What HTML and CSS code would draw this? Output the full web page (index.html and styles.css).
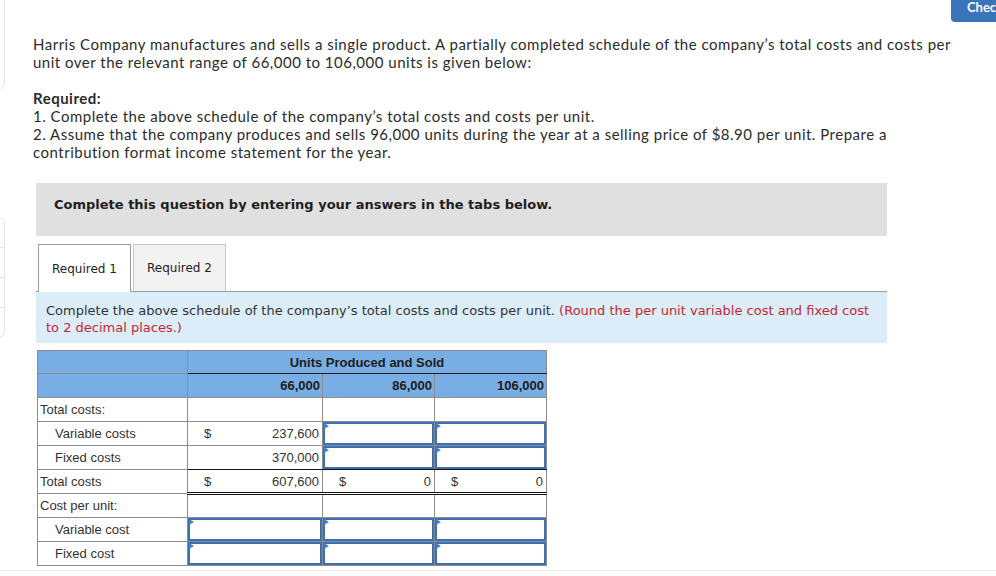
FILE: index.html
```html
<!DOCTYPE html>
<html lang="en">
<head>
<meta charset="utf-8">
<title>Harris Company</title>
<link rel="stylesheet" href="styles.css">
</head>
<body>
<div class="check">Check my work</div>
<div class="shell">
  <aside class="rail">
    <div class="rail-card rail-top"></div>
    <div class="rail-card rail-list"><div></div><div></div><div></div><div></div></div>
  </aside>
  <main class="content">
    <p class="intro">Harris Company manufactures and sells a single product. A partially completed schedule of the company’s total costs and costs per unit over the relevant range of 66,000 to 106,000 units is given below:</p>
    <div class="required">
      <p class="req-title">Required:</p>
      <p>1. Complete the above schedule of the company’s total costs and costs per unit.</p>
      <p>2. Assume that the company produces and sells 96,000 units during the year at a selling price of $8.90 per unit. Prepare a contribution format income statement for the year.</p>
    </div>
    <div class="instructions">Complete this question by entering your answers in the tabs below.</div>
    <div class="tabs">
      <div class="tab active">Required 1</div>
      <div class="tab">Required 2</div>
    </div>
    <div class="prompt">Complete the above schedule of the company’s total costs and costs per unit. <span class="hint">(Round the per unit variable cost and fixed cost to 2 decimal places.)</span></div>
    <table class="schedule">
      <colgroup><col class="c-label"><col class="c-1"><col class="c-n"><col class="c-n"></colgroup>
      <tr class="h1">
        <th class="blank"></th>
        <th colspan="3" class="units">Units Produced and Sold</th>
      </tr>
      <tr class="h2">
        <th class="blank"></th>
        <th class="qty">66,000</th>
        <th class="qty">86,000</th>
        <th class="qty">106,000</th>
      </tr>
      <tr>
        <td class="label">Total costs:</td>
        <td></td><td></td><td></td>
      </tr>
      <tr>
        <td class="label indent">Variable costs</td>
        <td class="num"><div class="amt"><span>$</span><span>237,600</span></div></td>
        <td class="input"><div class="field"></div></td>
        <td class="input"><div class="field"></div></td>
      </tr>
      <tr class="above-total">
        <td class="label indent">Fixed costs</td>
        <td class="num"><div class="amt"><span></span><span>370,000</span></div></td>
        <td class="input"><div class="field"></div></td>
        <td class="input"><div class="field"></div></td>
      </tr>
      <tr class="total">
        <td class="label">Total costs</td>
        <td class="num"><div class="amt"><span>$</span><span>607,600</span></div></td>
        <td class="num"><div class="amt"><span>$</span><span>0</span></div></td>
        <td class="num"><div class="amt"><span>$</span><span>0</span></div></td>
      </tr>
      <tr>
        <td class="label">Cost per unit:</td>
        <td></td><td></td><td></td>
      </tr>
      <tr>
        <td class="label indent">Variable cost</td>
        <td class="input"><div class="field"></div></td>
        <td class="input"><div class="field"></div></td>
        <td class="input"><div class="field"></div></td>
      </tr>
      <tr>
        <td class="label indent">Fixed cost</td>
        <td class="input"><div class="field"></div></td>
        <td class="input"><div class="field"></div></td>
        <td class="input"><div class="field"></div></td>
      </tr>
    </table>
  </main>
</div>
<div class="footer-line"></div>
</body>
</html>
```
FILE: styles.css
```css
html, body {
  margin: 0;
  padding: 0;
}
body {
  width: 996px;
  height: 576px;
  overflow: hidden;
  position: relative;
  background: #fff;
  font-family: "Lato", "Open Sans", sans-serif;
  color: #2b2b2b;
}
.check {
  position: absolute;
  top: 0;
  left: 951px;
  height: 22px;
  box-sizing: border-box;
  padding: 0 14px 0 16px;
  background: #3a74ba;
  color: #fff;
  font: 700 13px/14px "Lato", sans-serif;
  white-space: nowrap;
  border-radius: 0 0 0 4px;
}
.shell {
  display: flex;
}
.rail {
  width: 5px;
  flex: none;
}
.rail-card {
  box-sizing: border-box;
  width: 41px;
  margin-left: -36px;
  border: 1px solid #e4e4e4;
  background: #fff;
}
.rail-top {
  height: 99px;
  margin-top: -10px;
  border-radius: 0 0 6px 0;
}
.rail-list {
  margin-top: 128px;
  border-radius: 0 6px 6px 0;
}
.rail-list div {
  height: 29px;
  border-bottom: 1px solid #e4e4e4;
}
.rail-list div:last-child {
  border-bottom: 0;
}
.content {
  flex: 1;
  padding: 35px 0 0 28px;
}
.intro, .required p {
  margin: 0;
}
.intro, .required {
  width: 930px;
  font-size: 15px;
  line-height: 18px;
  letter-spacing: 0.5px;
}
.required {
  margin-top: 18px;
}
.req-title {
  font-weight: 700;
}
.instructions {
  margin: 22px 0 0 3px;
  width: 851px;
  height: 53px;
  box-sizing: border-box;
  padding: 14px 0 0 18px;
  background: #e0e0e0;
  font: 700 13px/16px "DejaVu Sans", Verdana, sans-serif;
  color: #1e1e1e;
}
.tabs {
  margin: 8px 0 0 3px;
  width: 849px;
  height: 47px;
  padding-left: 2px;
  display: flex;
  align-items: flex-start;
  gap: 2px;
  border-bottom: 1px solid #9a9a9a;
}
.tab {
  width: 93px;
  height: 47px;
  box-sizing: border-box;
  border: 1px solid #c9c9c9;
  border-bottom: 0;
  background: #f2f2f2;
  display: flex;
  align-items: center;
  justify-content: center;
  font: 12px "DejaVu Sans", Verdana, sans-serif;
  color: #222;
}
.tab.active {
  height: 48px;
  background: #fff;
  border-color: #9a9a9a;
}
.prompt {
  margin-left: 3px;
  width: 851px;
  height: 51px;
  box-sizing: border-box;
  padding: 10px 4px 0 10px;
  background: #dcedfa;
  font: 13px/17px "DejaVu Sans", Verdana, sans-serif;
  color: #333;
}
.hint {
  color: #c4262e;
}
.schedule {
  margin: 7px 0 0 4px;
  border-collapse: collapse;
  table-layout: fixed;
  width: 509px;
  font: 13px "Liberation Sans", Arial, sans-serif;
  color: #333;
}
.c-label { width: 150px; }
.c-1 { width: 135px; }
.c-n { width: 112px; }
.schedule tr {
  height: 24px;
}
.schedule tr.h1 {
  height: 23px;
}
.schedule th, .schedule td {
  border: 1px solid #8c8c8c;
  padding: 0 3px;
  vertical-align: middle;
}
.schedule th {
  background: #79aee4;
  color: #1c1c1c;
  font-weight: 700;
}
.schedule th.units {
  text-align: center;
  border-bottom-color: #1a1a1a;
}
.schedule th.qty {
  text-align: right;
  padding-right: 2px;
  border-top-color: #1a1a1a;
}
.schedule td.label {
  padding-left: 2px;
  white-space: nowrap;
}
.schedule td.indent {
  padding-left: 17px;
}
.schedule td.num {
  padding: 0 3px 0 16px;
}
.amt {
  display: flex;
  justify-content: space-between;
}
.schedule td.input {
  padding: 0;
  height: 23px;
}
.field {
  position: relative;
  height: 23px;
  box-sizing: border-box;
  border: 2px solid #3b70b4;
  background: #fff;
}
.field::before {
  content: "";
  position: absolute;
  top: -1px;
  left: -1px;
  border-left: 5px solid #3f80d0;
  border-top: 3px solid transparent;
  border-bottom: 3px solid transparent;
}
.above-total td.num, .above-total td.input {
  border-bottom-color: #111;
}
.total td.num {
  border-top-color: #111;
  border-bottom: 3px double #111;
}
.footer-line {
  margin-top: 4px;
  border-top: 1px solid #ececec;
}
```
